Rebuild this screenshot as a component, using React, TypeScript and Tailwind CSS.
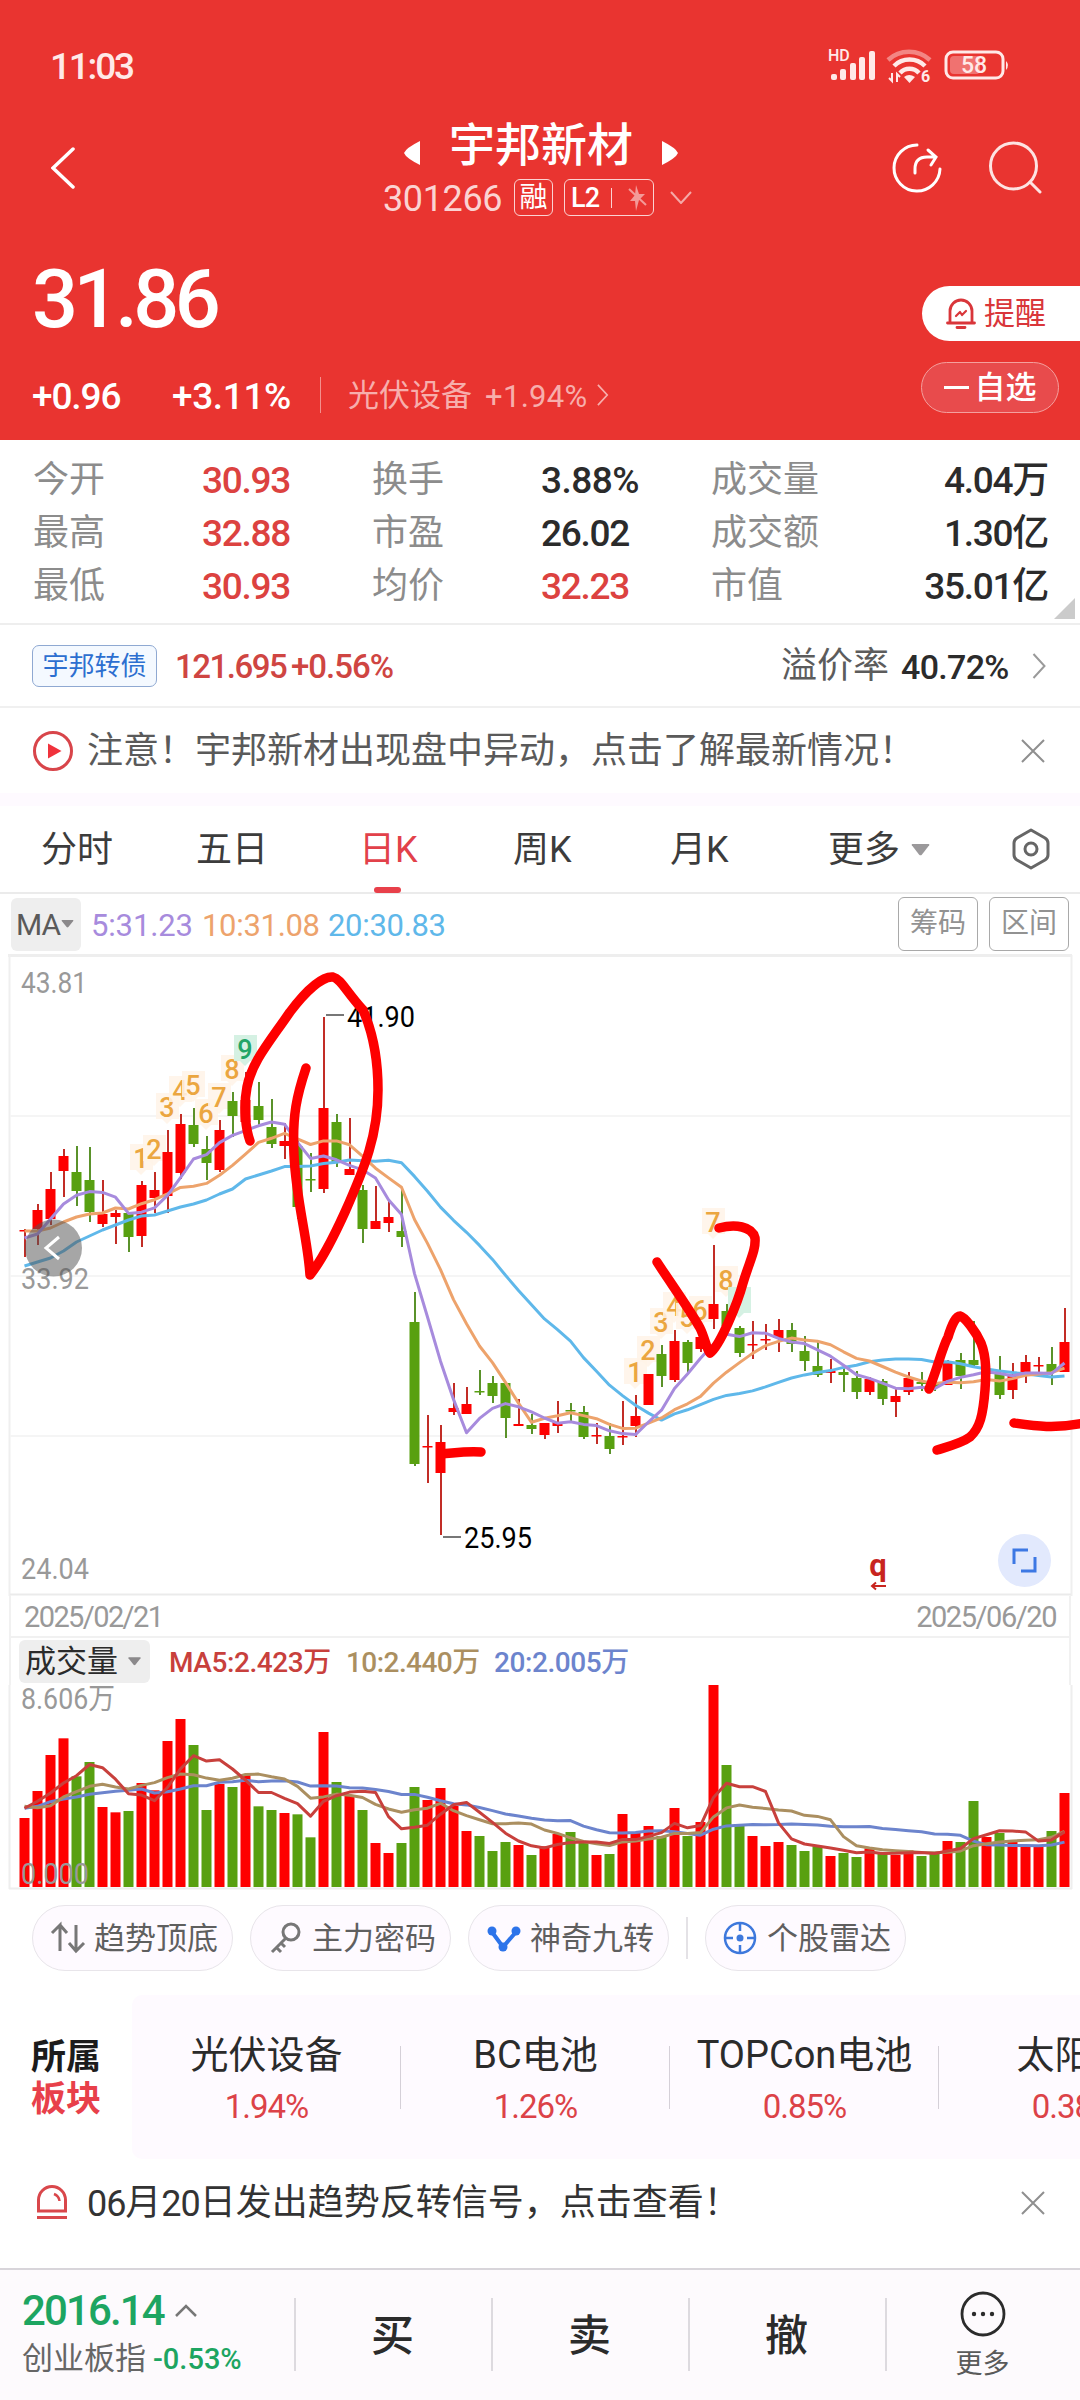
import React from 'react';
import clsx from 'clsx';

type Candle = ['r' | 'g', number, number, number, number];

/* ── Chart data ── */

const STEP = 13;
const X0 = 24.5;
const RED = '#fe0000';
const GREEN = '#58a010';

// [direction, high, body top, body bottom, low] in panel pixels
const CANDLES: Candle[] = [
  ['r', 279, 280, 281, 307], ['r', 254, 260, 279, 295], ['r', 222, 239, 269, 275], ['r', 199, 206, 221, 247],
  ['g', 196, 222, 241, 256], ['g', 197, 230, 262, 272], ['r', 230, 264, 274, 277], ['r', 260, 263, 267, 294],
  ['g', 262, 263, 287, 302], ['r', 231, 235, 286, 297], ['r', 222, 240, 248, 263], ['r', 180, 202, 246, 263],
  ['r', 164, 174, 223, 229], ['g', 158, 175, 194, 197], ['g', 186, 199, 213, 230], ['r', 170, 180, 220, 222],
  ['g', 142, 151, 166, 187], ['r', 122, 150, 172, 180], ['g', 132, 156, 170, 175], ['g', 149, 177, 194, 198],
  ['r', 173, 191, 196, 209], ['g', 190, 196, 257, 269], ['g', 203, 229, 230, 242], ['r', 67, 158, 239, 243],
  ['g', 164, 172, 213, 217], ['r', 168, 219, 225, 225], ['g', 235, 240, 279, 293], ['r', 236, 271, 279, 279],
  ['r', 251, 267, 273, 282], ['g', 240, 281, 287, 297], ['g', 342, 372, 514, 516], ['r', 465, 496, 497, 533],
  ['r', 475, 492, 523, 585], ['r', 433, 458, 462, 465], ['r', 437, 454, 464, 464], ['g', 420, 441, 442, 445],
  ['g', 426, 433, 446, 453], ['g', 433, 433, 468, 488], ['r', 449, 474, 476, 476], ['g', 464, 475, 479, 484],
  ['r', 473, 473, 485, 489], ['r', 451, 472, 476, 483], ['g', 453, 460, 461, 473], ['g', 456, 462, 487, 489],
  ['r', 473, 485, 486, 494], ['g', 473, 486, 499, 504], ['r', 451, 486, 487, 495], ['r', 445, 466, 476, 487],
  ['r', 424, 424, 455, 455], ['g', 395, 404, 426, 437], ['r', 380, 391, 430, 432], ['g', 390, 392, 413, 423],
  ['r', 380, 387, 399, 402], ['r', 295, 354, 369, 379], ['g', 354, 361, 376, 385], ['g', 376, 378, 403, 407],
  ['r', 371, 394, 395, 409], ['r', 374, 389, 390, 400], ['r', 369, 380, 388, 402], ['g', 373, 380, 394, 402],
  ['g', 386, 401, 411, 421], ['g', 390, 416, 425, 427], ['r', 409, 421, 423, 433], ['g', 418, 422, 425, 442],
  ['g', 421, 428, 442, 449], ['r', 427, 429, 442, 445], ['g', 429, 431, 449, 455], ['r', 437, 446, 452, 467],
  ['r', 422, 428, 442, 445], ['g', 422, 432, 434, 441], ['g', 431, 434, 437, 441], ['r', 410, 412, 435, 435],
  ['g', 403, 410, 426, 439], ['g', 371, 410, 415, 418], ['r', 415, 419, 424, 430], ['g', 406, 424, 445, 449],
  ['r', 413, 424, 440, 449], ['r', 405, 412, 423, 433], ['r', 407, 415, 416, 427], ['g', 397, 414, 422, 435],
  ['r', 358, 392, 422, 422],
];

const VOLUMES = [
  207, 288, 396, 446, 332, 375, 240, 224, 228, 312, 290, 438, 504, 426, 231, 309, 300, 336, 242, 231,
  222, 218, 149, 465, 315, 276, 231, 132, 102, 132, 300, 261, 297, 243, 168, 153, 108, 135, 126, 96,
  122, 159, 165, 135, 96, 99, 219, 162, 183, 153, 237, 153, 195, 606, 366, 185, 153, 123, 135, 126,
  108, 122, 93, 102, 90, 116, 102, 96, 110, 93, 102, 138, 135, 258, 150, 162, 135, 122, 120, 168, 282,
];

// Values before the window has enough bars of its own
const PRICE_SEED: Record<number, number[]> = {
  5: [288, 284, 269, 254],
  10: [281, 281, 278, 272, 267, 264, 263, 258, 259],
  20: [316, 312, 308, 301, 292, 286, 280, 275, 270, 266, 265, 261, 257, 254, 250, 244, 239, 229, 225],
};
const VOL_SEED: Record<number, number[]> = {
  5: [236, 257, 282, 312],
  10: [242, 238, 244, 270, 286, 302, 308, 300, 294],
  20: [236, 242, 256, 264, 270, 278, 283, 287, 290, 294, 282, 286, 294, 304, 304, 314, 316, 320, 316],
};

const PRICE_LINES: [number, string][] = [[20, '#5fb8ea'], [10, '#eda36c'], [5, '#a78bdd']];
const VOL_LINES: [number, string][] = [[20, '#6c84cd'], [10, '#ab8f60'], [5, '#c8403c']];

// [digit, bar index, centre y]
const MARKS: [string, number, number][] = [
  ['1', 9, 209], ['2', 10, 200], ['3', 11, 158], ['4', 12, 141], ['5', 13, 136], ['6', 14, 164],
  ['7', 15, 148], ['8', 16, 120], ['9', 17, 100],
  ['1', 47, 423], ['2', 48, 401], ['3', 49, 373], ['4', 50, 357], ['5', 51, 368], ['6', 52, 361],
  ['7', 53, 273], ['8', 54, 331], ['', 55, 352],
];

// Freehand pen marks
const PEN = [
  'M250,191 C246,180 243,158 247,137 C252,112 268,94 290,62 C305,42 322,26 333,27 C341,29 345,40 363,60 C374,85 378,115 378,140 C378,185 365,217 345,262 C330,295 318,315 310,325 C308,290 296,250 294,205 C292,165 297,145 306,118',
  'M657,312 C672,335 690,360 700,378 C705,388 706,398 710,403 C720,396 738,352 743,333 C750,310 756,300 755,288 C752,276 735,274 719,278',
  'M441,504 C455,503 465,501 481,502',
  'M929,439 C937,420 942,398 948,387 C952,374 956,366 960,366 C965,367 976,382 981,393 C987,408 986,425 985,440 C983,465 980,478 970,487 C962,493 950,496 937,500',
  'M1014,473 C1035,476 1055,479 1084,473',
];

const xAt = (i: number) => X0 + i * STEP;
const colorOf = (dir: 'r' | 'g') => (dir === 'r' ? RED : GREEN);

function movingAverage(values: number[], n: number, seed: number[]) {
  return values.map((_, i) =>
    i < n - 1 ? seed[i] : values.slice(i - n + 1, i + 1).reduce((a, b) => a + b, 0) / n,
  );
}

const toPoints = (ys: number[]) => ys.map((y, i) => `${xAt(i)},${y.toFixed(1)}`).join(' ');

const CLOSES = CANDLES.map(([dir, , top, bottom]) => (dir === 'r' ? top : bottom));

/* ── Small pieces ── */

const Num = ({ className, tracking = 'tracking-[-0.03em]', children }: { className?: string; tracking?: string; children: React.ReactNode }) => (
  <span className={clsx('inline-block translate-y-px whitespace-nowrap', tracking, className)}>{children}</span>
);

const Caret = ({ className }: { className?: string }) => (
  <svg viewBox="0 0 14 9" className={className}>
    <path d="M1 0h12q1 0 .5 1L8 8q-1 1-2 0L.5 1Q0 0 1 0z" fill="currentColor" />
  </svg>
);

const Chevron = ({ className }: { className?: string }) => (
  <svg viewBox="0 0 14 26" className={className} fill="none" stroke="currentColor" strokeWidth="2">
    <path d="M1 1l11 12L1 25" />
  </svg>
);

const Close = () => (
  <svg viewBox="0 0 24 24" className="w-6 h-6 text-[#8f8f8f]" fill="none" stroke="currentColor" strokeWidth="2">
    <path d="M1 1l22 22M23 1L1 23" />
  </svg>
);

/* ── Header ── */

const StatusBar = () => (
  <div className="flex items-center h-[132px] pl-[50px] pr-[70px] text-[#ffe9e8]">
    <Num className="text-[37px] font-medium" tracking="tracking-[-0.06em]">11:03</Num>
    <svg viewBox="0 0 184 36" className="ml-auto w-[184px] h-9 overflow-visible" fill="currentColor">
      <text x="2" y="13" fontSize="16" fontWeight="500">HD</text>
      <rect x="5" y="26" width="6" height="6" rx="2" />
      <rect x="14" y="21" width="6" height="11" rx="2" />
      <rect x="24" y="15" width="6" height="17" rx="2" />
      <rect x="33" y="9" width="6" height="23" rx="2" />
      <rect x="43" y="3" width="6" height="29" rx="2" />
      <g fill="none" stroke="currentColor" strokeWidth="4.500">
        <path d="M62 12 A31 31 0 0 1 104 12" opacity=".45" />
        <path d="M68 18 A22 22 0 0 1 99 18" />
        <path d="M74 25 A13 13 0 0 1 93 25" />
      </g>
      <path d="M78 29q5-4 11 0l-5.500 6z" />
      <path d="M66 25v8l-3-3M71 34v-8l3 3" stroke="currentColor" strokeWidth="2" fill="none" />
      <text x="95" y="34" fontSize="16" fontWeight="700">6</text>
      <rect x="120" y="4" width="57" height="26" rx="7" fill="none" stroke="currentColor" strokeWidth="3" />
      <rect x="124" y="8" width="30" height="18" rx="4" opacity=".35" />
      <path d="M180 13q4 4 0 9z" />
      <text x="148" y="25" fontSize="23" fontWeight="500" textAnchor="middle">58</text>
    </svg>
  </div>
);

const TitleBar = () => (
  <div className="flex items-start h-[124px] text-white">
    <svg viewBox="0 0 24 42" className="ml-[51px] mt-[15px] w-6 h-[42px]" fill="none" stroke="currentColor" strokeWidth="3.500" strokeLinecap="round">
      <path d="M22 2L2 21l20 19" />
    </svg>
    <div className="w-[817px]">
      <div className="flex items-center h-[52px] -mt-[13px] gap-[29px] ml-[329px]">
        <svg viewBox="0 0 16 24" className="w-4 h-6 mt-4"><path d="M16 0v24Q2 17 0 12 2 7 16 0z" fill="currentColor" /></svg>
        <span className="text-[46px] font-medium leading-none">宇邦新材</span>
        <svg viewBox="0 0 16 24" className="w-4 h-6 mt-4"><path d="M0 0v24q14-7 16-12Q14 7 0 0z" fill="currentColor" /></svg>
      </div>
      <div className="flex items-center mt-[7px] ml-[308px] h-[39px] leading-none">
        <Num className="text-[36px] text-[#fbd3d2] w-[131px]" tracking="tracking-[-0.01em]">301266</Num>
        <span className="w-[39px] h-[37px] rounded-[6px] border border-[#fbd3d2] text-[28px] flex items-center justify-center">融</span>
        <span className="ml-[11px] w-[90px] h-[37px] rounded-[6px] border border-[#fbd3d2] flex items-center pl-[6px]">
          <Num className="text-[27px] font-medium w-[40px]">L2</Num>
          <span className="w-px h-5 bg-[#fbd3d2]" />
          <svg viewBox="0 0 20 26" className="ml-[15px] w-5 h-[26px] text-[#f39a98]" fill="currentColor">
            <path d="M9 0l3 9h6l-6 6-3 11-1-10H3l5-6z" />
            <path d="M2 4l17 16" stroke="currentColor" strokeWidth="2" />
          </svg>
        </span>
        <svg viewBox="0 0 22 13" className="ml-4 w-[22px] h-[13px] text-[#f5a9a7]" fill="none" stroke="currentColor" strokeWidth="2">
          <path d="M1 1l10 11L21 1" />
        </svg>
      </div>
    </div>
    <svg viewBox="0 0 50 50" className="mt-[11px] w-[50px] h-[50px]" fill="none" stroke="currentColor" strokeWidth="3" strokeLinecap="round">
      <path d="M25 2A23 23 0 1 0 48 26" />
      <path d="M23 30V26Q23 14 35 14h8M36 7l8 7-5 8" />
    </svg>
    <svg viewBox="0 0 54 54" className="ml-[46px] mt-[8px] w-[54px] h-[54px]" fill="none" stroke="#fde3e2" strokeWidth="3" strokeLinecap="round">
      <circle cx="25.500" cy="26" r="23" />
      <path d="M42 42l10 10" />
    </svg>
  </div>
);

const PriceHeader = () => (
  <div className="flex justify-between h-[184px] text-white">
    <div className="pl-[32px]">
      <div className="h-[85px] flex items-center">
        <Num className="text-[81px] font-medium leading-none" tracking="tracking-[-0.055em]">31.86</Num>
      </div>
      <div className="flex items-center mt-[34px] h-[40px] leading-none">
        <Num className="text-[37px] font-medium w-[140px]">+0.96</Num>
        <Num className="text-[37px] font-medium w-[148px]" tracking="tracking-[-0.01em]">+3.11%</Num>
        <span className="w-px h-[36px] bg-[#f3908d] mr-[27px]" />
        <span className="text-[31px] text-[#f7aeac] w-[137px]">光伏设备</span>
        <Num className="text-[31px] text-[#f7aeac] w-[112px]" tracking="tracking-[0.01em]">+1.94%</Num>
        <Chevron className="w-3 h-[22px] text-[#f7aeac]" />
      </div>
    </div>
    <div className="flex flex-col items-end pt-[30px]">
      <div className="flex items-center w-[158px] h-[55px] rounded-l-full bg-white text-[#d9363a] pl-6 text-[31px] leading-none">
        <svg viewBox="0 0 30 32" className="w-[30px] h-8 mr-2" fill="none" stroke="currentColor" strokeWidth="2.800" strokeLinecap="round" strokeLinejoin="round">
          <path d="M4 25V13a11 11 0 0 1 22 0v12M1.500 25h27M11 29.500h8" />
          <path d="M10 18l4-4 2 3 4-4" strokeWidth="2.200" />
        </svg>
        提醒
      </div>
      <div className="mt-[21px] mr-[21px] flex items-center justify-center w-[138px] h-[51px] rounded-full border border-[#f4a09e] bg-[#e84b4c] text-[31px] font-medium leading-none">
        <span className="w-[25px] h-[3px] bg-white mr-[6px]" />
        自选
      </div>
    </div>
  </div>
);

/* ── Quote stats ── */

const STATS: [string, string, boolean][][] = [
  [['今开', '30.93', true], ['换手', '3.88%', false], ['成交量', '4.04万', false]],
  [['最高', '32.88', true], ['市盈', '26.02', false], ['成交额', '1.30亿', false]],
  [['最低', '30.93', true], ['均价', '32.23', true], ['市值', '35.01亿', false]],
];

const Stats = () => (
  <div className="relative h-[185px] pt-[13px] pl-[33px] pr-[32px] border-b-2 border-[#eeeeee] bg-white">
    {STATS.map((row, r) => (
      <div key={r} className="flex items-center h-[53px] leading-none text-[36px]">
        {row.map(([label, value, up], c) => (
          <React.Fragment key={label}>
            <span className={clsx('text-[#8c8c8c]', c === 2 ? 'flex-1' : 'w-[169px]')}>{label}</span>
            <Num
              className={clsx('text-[37px] font-medium', c < 2 && 'w-[170px]', up ? 'text-[#dc4240]' : 'text-[#2b2b2b]')}
              tracking={value.endsWith('%') ? 'tracking-[-0.015em]' : 'tracking-[-0.035em]'}
            >
              {value}
            </Num>
          </React.Fragment>
        ))}
      </div>
    ))}
    <svg viewBox="0 0 21 21" className="absolute right-[5px] bottom-[4px] w-[21px] h-[21px]">
      <path d="M21 0v21H0z" fill="#cbcbcb" />
    </svg>
  </div>
);

const BondRow = () => (
  <div className="flex items-center h-[83px] pl-[32px] pr-[33px] border-b-2 border-[#f0f0f0] leading-none">
    <span className="w-[125px] h-[42px] rounded-[7px] border border-[#8fa9d2] bg-[#f4f9ff] text-[#2d6fd0] text-[26px] flex items-center justify-center">宇邦转债</span>
    <Num className="ml-[18px] text-[33px] font-medium text-[#cf4542] w-[116px]" tracking="tracking-[-0.045em]">121.695</Num>
    <Num className="text-[33px] font-medium text-[#cf4542]">+0.56%</Num>
    <span className="ml-auto text-[36px] text-[#5c5c5c]">溢价率</span>
    <Num className="ml-[12px] w-[109px] text-[34px] font-medium text-[#2b2b2b]" tracking="tracking-[-0.02em]">40.72%</Num>
    <Chevron className="ml-[22px] w-[15px] h-[26px] text-[#9a9a9a]" />
  </div>
);

const NoticeRow = () => (
  <div className="flex items-center h-[85px] pl-[32px] pr-[35px] leading-none">
    <svg viewBox="0 0 42 42" className="w-[42px] h-[42px]">
      <circle cx="21" cy="21" r="18.500" fill="none" stroke="#d8454a" strokeWidth="3" />
      <path d="M16 13.500v15L29.500 21z" fill="#f0323c" />
    </svg>
    <span className="ml-[13px] flex-1 text-[36px] text-[#5a5a5a] whitespace-nowrap">注意！宇邦新材出现盘中异动，点击了解最新情况！</span>
    <Close />
  </div>
);

/* ── Period tabs ── */

const TABS = [
  { label: '分时', width: 'w-[155px]' },
  { label: '五日', width: 'w-[163px]' },
  { label: '日K', width: 'w-[154px]' },
  { label: '周K', width: 'w-[157px]' },
  { label: '月K', width: 'w-[158px]' },
  { label: '更多', width: 'w-[184px]' },
];

const Tabs = () => (
  <div className="flex h-[88px] pl-[41px] pt-px border-b-2 border-[#ebebeb] text-[36px] leading-none text-[#3c3c3c]">
    {TABS.map(({ label, width }) => (
      <div key={label} className={clsx('flex items-center', width, label === '日K' && 'relative text-[#e2414a]')}>
        {label}
        {label === '日K' && <span className="absolute left-[15px] -bottom-px w-[27px] h-[6px] rounded-full bg-[#e8404a]" />}
        {label === '更多' && <Caret className="ml-[11px] w-[19px] h-[12px] text-[#9b999b]" />}
      </div>
    ))}
    <svg viewBox="0 0 38 42" className="mt-[21px] w-[38px] h-[42px]" fill="none" stroke="#666" strokeWidth="3" strokeLinejoin="round">
      <path d="M19 2l14 8q3 2 3 5v12q0 3-3 5l-14 8-14-8q-3-2-3-5V15q0-3 3-5z" />
      <circle cx="19" cy="21" r="6" />
    </svg>
  </div>
);

const MaRow = () => (
  <div className="flex items-center h-[60px] pl-[11px] pr-[11px] leading-none text-[31px]">
    <span className="flex items-center w-[70px] h-[53px] rounded-[6px] bg-[#eeeeee] text-[#5a5a5a] pl-[5px] text-[30px]">
      <Num>MA</Num>
      <Caret className="ml-px w-[13px] h-[8px] text-[#8b898b]" />
    </span>
    <Num className="ml-[10px] w-[111px] text-[31px] text-[#a78bdd]" tracking="tracking-[-0.005em]">5:31.23</Num>
    <Num className="w-[126px] text-[31px] text-[#eda36c]" tracking="tracking-[-0.01em]">10:31.08</Num>
    <Num className="text-[31px] text-[#5fb8ea]" tracking="tracking-[-0.01em]">20:30.83</Num>
    <span className="ml-auto flex items-center justify-center w-[80px] h-[54px] rounded-[6px] border border-[#a9a9a9] text-[28px] text-[#929292]">筹码</span>
    <span className="ml-[11px] flex items-center justify-center w-[80px] h-[54px] rounded-[6px] border border-[#a9a9a9] text-[28px] text-[#929292]">区间</span>
  </div>
);

/* ── Candles ── */

const PriceChart = () => (
  <svg viewBox="0 4 1080 642" className="block w-[1080px] h-[642px]">
    <path d="M8 5.500H1072" stroke="#eeeeee" strokeWidth="3" />
    <path d="M9.500 5V646M1071.500 5V646" stroke="#efefef" strokeWidth="2" />
    <path d="M10 166H1071M10 326H1071M10 486H1071" stroke="#f5f5f5" strokeWidth="2" />
    <path d="M10 644.500H1071" stroke="#ebebeb" strokeWidth="2" />

    <g fontSize="29" fill="#999">
      <text x="21" y="43" textLength="66" lengthAdjust="spacingAndGlyphs">43.81</text>
      <text x="21" y="339" textLength="68" lengthAdjust="spacingAndGlyphs">33.92</text>
      <text x="21" y="629" textLength="68" lengthAdjust="spacingAndGlyphs">24.04</text>
    </g>

    {/* Nine-turn counters */}
    {MARKS.map(([digit, i, y]) => {
      const nine = digit === '9' || digit === '';
      const x = xAt(i) - 0.5;
      return (
        <g key={i}>
          <path
            d={`M${x - 11} ${y - 15}h23v26h-7l-5 5-5-5h-6z`}
            fill={nine ? '#d3f0e1' : '#fff3e8'}
            fillOpacity={nine ? 0.95 : 0.85}
          />
          <text x={x} y={y + 9} fontSize="27" fontWeight="500" textAnchor="middle" fill={nine ? '#22a566' : '#eba640'}>{digit}</text>
        </g>
      );
    })}

    {CANDLES.map(([dir, high, top, bottom, low], i) => {
      const thin = bottom - top <= 1;
      return (
        <g key={i} fill={colorOf(dir)}>
          <rect x={xAt(i) - 0.5} y={high} width="2" height={low - high} fill={dir === 'r' ? '#c22d26' : '#5a922a'} />
          <rect x={xAt(i) - 5} y={top} width="10" height={thin ? 1.5 : bottom - top} />
        </g>
      );
    })}

    {PRICE_LINES.map(([n, color]) => (
      <polyline key={n} points={toPoints(movingAverage(CLOSES, n, PRICE_SEED[n]))} fill="none" stroke={color} strokeWidth="3" strokeLinejoin="round" />
    ))}

    {/* High / low of the window */}
    <path d="M326 65h18M443 587h18" stroke="#777" strokeWidth="2" />
    <g fontSize="29" fill="#000">
      <text x="347" y="77" textLength="68" lengthAdjust="spacingAndGlyphs">41.90</text>
      <text x="464" y="598" textLength="68" lengthAdjust="spacingAndGlyphs">25.95</text>
    </g>

    <circle cx="53.500" cy="298" r="28.500" fill="#555" fillOpacity=".52" />
    <path d="M59 287L46 298l13 11" fill="none" stroke="#fff" strokeWidth="3" />

    <text x="878" y="626" fontSize="31" fontWeight="700" fill="#c8251f" textAnchor="middle">q</text>
    <path d="M886 636h-14m4-3.500l-4 3.500 4 3.500" fill="none" stroke="#c8251f" strokeWidth="2" />

    <circle cx="1024.500" cy="610.500" r="26.500" fill="#e2e9fd" />
    <path d="M1028 600h-14v14M1021 621h14v-14" fill="none" stroke="#3d78e4" strokeWidth="3" />

    <g fill="none" stroke={RED} strokeWidth="9.500" strokeLinecap="round" strokeLinejoin="round">
      {PEN.map(d => <path key={d} d={d} />)}
    </g>
  </svg>
);

/* ── Volume ── */

const VOL_BASE = 202;

const VolumeChart = () => (
  <svg viewBox="0 0 1080 205" className="block w-[1080px] h-[205px] overflow-visible">
    <path d="M9.500 0V204M1071.500 0V204M9 203.500H1072" stroke="#eeeeee" strokeWidth="2" fill="none" />
    {VOLUMES.map((v, i) => (
      <rect key={i} x={xAt(i) - 5} y={VOL_BASE - v / 3} width="10" height={v / 3} fill={colorOf(CANDLES[i][0])} />
    ))}
    {VOL_LINES.map(([n, color]) => (
      <polyline
        key={n}
        points={toPoints(movingAverage(VOLUMES, n, VOL_SEED[n]).map(v => VOL_BASE - v / 3))}
        fill="none"
        stroke={color}
        strokeWidth="3"
        strokeLinejoin="round"
      />
    ))}
    <g fontSize="29" fill="#999">
      <text x="21" y="24" textLength="94" lengthAdjust="spacingAndGlyphs">8.606万</text>
      <text x="21" y="199" textLength="68" lengthAdjust="spacingAndGlyphs">0.000</text>
    </g>
  </svg>
);

const VolumePanel = () => (
  <>
    <div className="flex items-center justify-between h-[42px] mx-[9px] pl-[13px] pr-[13px] border-x-2 border-b-2 border-[#f1f1f1] text-[29px] leading-none text-[#999]">
      <Num tracking="tracking-[-0.055em]">2025/02/21</Num>
      <Num tracking="tracking-[-0.05em]">2025/06/20</Num>
    </div>
    <div className="flex items-center h-[47px] mx-[9px] pl-[8px] border-x-2 border-[#f1f1f1] leading-none">
      <span className="flex items-center w-[131px] h-[43px] rounded-[6px] bg-[#eeeeee] pl-[6px] text-[31px] text-[#2b2b2b]">
        成交量
        <Caret className="ml-[10px] w-[13px] h-[9px] text-[#8b898b]" />
      </span>
      <Num className="ml-[19px] w-[177px] text-[28px] font-medium text-[#c8403c]" tracking="tracking-[-0.015em]">MA5:2.423万</Num>
      <Num className="w-[148px] text-[28px] font-medium text-[#ab8f60]" tracking="tracking-[-0.02em]">10:2.440万</Num>
      <Num className="text-[28px] font-medium text-[#6c84cd]" tracking="tracking-[-0.015em]">20:2.005万</Num>
    </div>
    <VolumeChart />
  </>
);

/* ── Tool chips ── */

const Chip = ({ label, children }: { label: string; children: React.ReactNode }) => (
  <div className="flex items-center w-[201px] h-[66px] rounded-full border-[1.5px] border-[#e8e5ea] bg-[#fefaff] pl-[17px] text-[31px] leading-none text-[#5f5f5f]">
    <svg viewBox="0 0 36 36" className="w-9 h-9 mr-[8px] shrink-0" fill="none" strokeWidth="3">{children}</svg>
    <span className="whitespace-nowrap">{label}</span>
  </div>
);

const Chips = () => (
  <div className="flex items-center h-[66px] mt-[15px] pl-[32px] gap-[17px]">
    <Chip label="趋势顶底">
      <path d="M2 13l8-8v26M17 13l-7-8M26 5v26M19 23l7 8 8-8" stroke="#777" />
    </Chip>
    <Chip label="主力密码">
      <circle cx="23" cy="12" r="8" stroke="#777" />
      <path d="M18 18L4 32M8 27l5 5M12 22l5 5" stroke="#777" />
    </Chip>
    <Chip label="神奇九转">
      <path d="M6 12l11 15 13-15" stroke="#2d74ea" strokeWidth="4" />
      <g fill="#2d74ea"><circle cx="6" cy="11" r="4.500" /><circle cx="17" cy="27" r="4.500" /><circle cx="30" cy="11" r="4.500" /></g>
    </Chip>
    <span className="w-[2px] h-[42px] bg-[#e4e2e6]" />
    <Chip label="个股雷达">
      <circle cx="17" cy="18" r="15" stroke="#3d78dc" strokeWidth="2.500" />
      <circle cx="17" cy="18" r="3.500" fill="#3d78dc" />
      <path d="M17 3v8M17 25v8M2 18h8M24 18h8" stroke="#3d78dc" strokeWidth="2.500" />
    </Chip>
  </div>
);

/* ── Sectors ── */

const SECTORS = [
  ['光伏设备', '1.94%'],
  ['BC电池', '1.26%'],
  ['TOPCon电池', '0.85%'],
  ['太阳能', '0.38%'],
];

const Sectors = () => (
  <div className="flex mt-[24px] h-[164px] overflow-hidden leading-none">
    <div className="w-[132px] shrink-0 pl-[31px] pt-[41px] text-[35px] font-bold">
      <div className="h-[42px] flex items-center text-[#1c1c1c]">所属</div>
      <div className="h-[42px] flex items-center text-[#e8404a]">板块</div>
    </div>
    <div className="flex shrink-0 rounded-l-[10px] bg-[#fefaff]">
      {SECTORS.map(([name, change], i) => (
        <div key={name} className="relative w-[269px] pt-[40px] flex flex-col items-center">
          <div className="h-[40px] flex items-center text-[38px] text-[#2b2b2b] whitespace-nowrap">{name}</div>
          <Num className="mt-[14px] text-[33px] text-[#dc4248]">{change}</Num>
          {i < 3 && <span className="absolute right-0 top-[51px] w-px h-[63px] bg-[#d5d0d8]" />}
        </div>
      ))}
    </div>
  </div>
);

const AlertRow = () => (
  <div className="flex items-center h-[109px] pb-[21px] pl-[34px] pr-[35px] leading-none">
    <svg viewBox="0 0 36 36" className="w-9 h-9" fill="none" stroke="#d9474b" strokeWidth="3">
      <path d="M4.500 26V15a13.500 13.500 0 0 1 27 0v11zM3 32.500h30" />
      <path d="M20 9q5 2 5.500 7" strokeWidth="2.500" />
    </svg>
    <span className="ml-[17px] flex-1 text-[36px] text-[#333] whitespace-nowrap">
      <Num>06</Num>月<Num>20</Num>日发出趋势反转信号，点击查看！
    </span>
    <Close />
  </div>
);

/* ── Bottom bar ── */

const BottomBar = () => (
  <div className="flex h-[133px] border-t-2 border-[#d8d5da] bg-[#fdfafd] leading-none">
    <div className="w-[294px] pl-[22px] pt-[20px]">
      <div className="flex items-center h-[40px]">
        <Num className="text-[42px] font-medium text-[#1da561]" tracking="tracking-[-0.045em]">2016.14</Num>
        <svg viewBox="0 0 22 13" className="ml-[11px] w-[22px] h-[13px]" fill="none" stroke="#777" strokeWidth="2.500">
          <path d="M1 12L11 2l10 10" />
        </svg>
      </div>
      <div className="flex items-center h-[40px] mt-[8px]">
        <span className="text-[31px] text-[#666]">创业板指</span>
        <Num className="ml-[7px] text-[29px] font-medium text-[#1da561]" tracking="tracking-normal">-0.53%</Num>
      </div>
    </div>
    {['买', '卖', '撤'].map(action => (
      <div key={action} className="relative w-[197px] pt-px flex items-center justify-center text-[43px] font-medium text-[#2b2b2b]">
        <span className="absolute left-0 top-[28px] w-[2px] h-[73px] bg-[#dddadf]" />
        {action}
      </div>
    ))}
    <div className="relative flex-1 flex flex-col items-center pt-[21px] text-[27px] text-[#5a5a5a]">
      <span className="absolute left-0 top-[28px] w-[2px] h-[73px] bg-[#dddadf]" />
      <svg viewBox="0 0 46 46" className="w-[46px] h-[46px] mb-[14px]" fill="#2b2b2b">
        <circle cx="23" cy="23" r="21" fill="none" stroke="#2b2b2b" strokeWidth="2.800" />
        <circle cx="14" cy="23" r="2.200" /><circle cx="23" cy="23" r="2.200" /><circle cx="32" cy="23" r="2.200" />
      </svg>
      更多
    </div>
  </div>
);

export default function App() {
  return (
    <div className="w-[1080px] h-[2400px] overflow-hidden bg-white font-[Roboto,'Noto_Sans_CJK_SC',sans-serif]">
      <header className="bg-[#e93430]">
        <StatusBar />
        <TitleBar />
        <PriceHeader />
      </header>
      <Stats />
      <BondRow />
      <NoticeRow />
      <div className="h-[13px] bg-[#fefaff]" />
      <Tabs />
      <MaRow />
      <PriceChart />
      <VolumePanel />
      <Chips />
      <Sectors />
      <AlertRow />
      <BottomBar />
    </div>
  );
}
